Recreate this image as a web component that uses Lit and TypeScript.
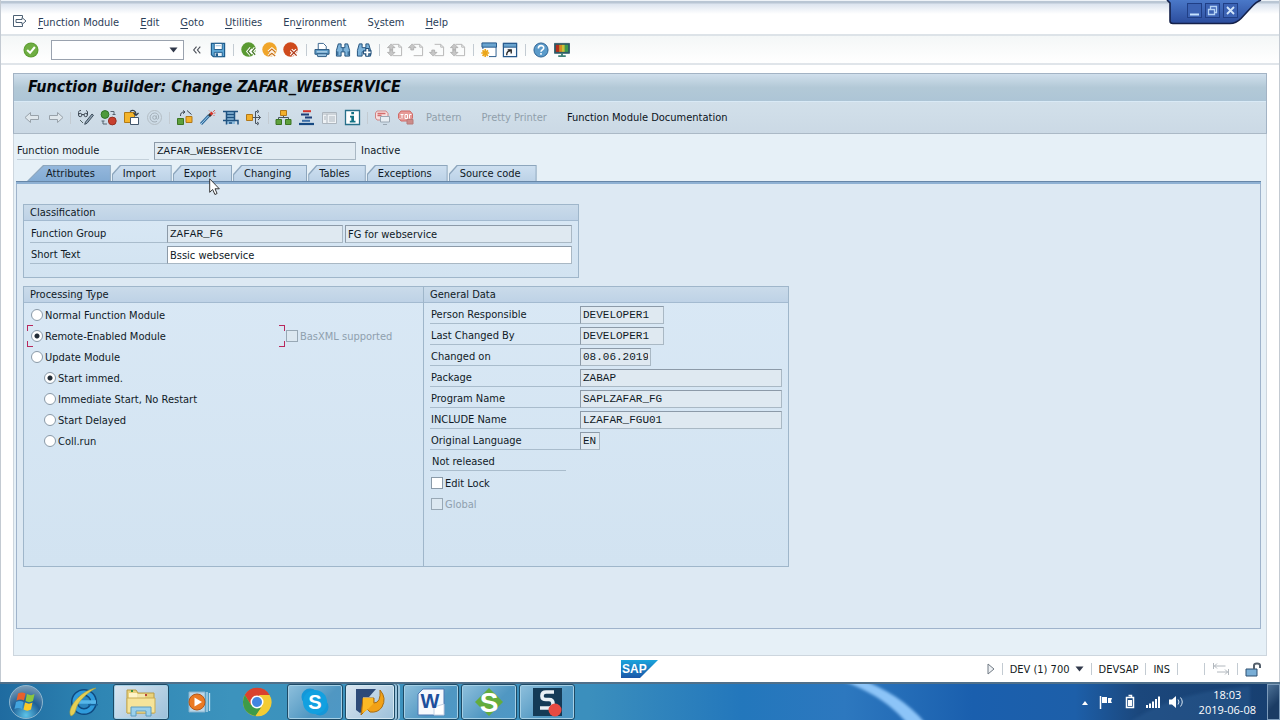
import { LitElement, html, svg, css, type TemplateResult, type SVGTemplateResult } from "lit";
import { customElement, property, state } from "lit/decorators.js";
import { classMap } from "lit/directives/class-map.js";

const icon = (body: SVGTemplateResult, size = 17, cls = "icon") =>
  html`<svg class=${cls} width=${size} height=${size} viewBox="0 0 17 17" aria-hidden="true">${body}</svg>`;

const page = svg`<path d="M6 2.500h6.500l3 3v9H6M12.500 2.500v3h3" fill="none" stroke="#b4b4b4"/>`;
const sheet = (arrows: SVGTemplateResult) => svg`${page}${arrows}`;
const upArrow = svg`<path d="M4.500 2 8.500 6H6v2.500H3V6H.500z" fill="#c6c6c6" stroke="#a8a8a8" stroke-width=".8"/>`;
const downArrow = svg`<path d="M4.500 15 8.500 11H6V8.500H3V11H.500z" fill="#c6c6c6" stroke="#a8a8a8" stroke-width=".8"/>`;

const glyphs: Record<string, SVGTemplateResult> = {
  enter: svg`<circle cx="8.500" cy="8.500" r="8" fill="#5f9f35"/><circle cx="8.500" cy="8.500" r="6.800" fill="#6fae43"/><path d="M4.400 8.600 7.500 11.500 12.600 5.300" fill="none" stroke="#fff" stroke-width="2.200"/>`,
  collapse: svg`<path d="M8 5 5 8.500 8 12M12 5 9 8.500 12 12" fill="none" stroke="#4b4f58" stroke-width="1.200"/>`,
  save: svg`<path d="M1.500 1.500h14v14h-12l-2-2z" fill="#5fa8d6" stroke="#1e5c8c" stroke-width="1.300"/><path d="M4.500 1.500h8.500v6.500h-8.500z" fill="#fff" stroke="#1e5c8c"/><path d="M4.500 15.500v-4.500h8.500v4.500z" fill="#e8f2fa" stroke="#1e5c8c"/><path d="M6 4h5.500" stroke="#8ebbdc"/><path d="M6 12h2.500v3H6z" fill="#1e5c8c"/>`,
  back: svg`<circle cx="8" cy="8" r="7.700" fill="#5a9a32"/><path d="M10.500 6.500 7.500 10l3 3.500M15 6.500 12 10l3 3.500" fill="none" stroke="#fff" stroke-width="3.400"/><path d="M10.500 6.500 7.500 10l3 3.500M15 6.500 12 10l3 3.500" fill="none" stroke="#4b7a2d" stroke-width="1.400"/>`,
  exit: svg`<circle cx="8" cy="8" r="7.700" fill="#f0a52a"/><path d="M7 10.500 10.500 7.500 14 10.500M7 15 10.500 12 14 15" fill="none" stroke="#fff" stroke-width="3.400"/><path d="M7 10.500 10.500 7.500 14 10.500M7 15 10.500 12 14 15" fill="none" stroke="#c9731c" stroke-width="1.400"/>`,
  cancel: svg`<circle cx="8" cy="8" r="7.700" fill="#cf4a1c"/><path d="m8.500 8.500 6 6m0-6-6 6" stroke="#fff" stroke-width="3.600"/><path d="m8.500 8.500 6 6m0-6-6 6" stroke="#b03a18" stroke-width="1.400"/>`,
  print: svg`<path d="M4.500 8V1.500h5.500l3 3V8" fill="#fff" stroke="#35628c"/><path d="M1 8h15v5H1z" fill="#5e9bc6" stroke="#28567f"/><path d="M3 12.500h11l-1 3H4z" fill="#9cc5e2" stroke="#28567f"/><path d="M3 10.500h11" stroke="#d8ebf7"/>`,
  find: svg`<path d="M3.500 2h3v4h4V2h3l2 7v6h-5v-4.500h-4V15h-5V9z" fill="#7db3da" stroke="#1f4f7a"/><path d="M8.500 6v4M3 10v4M14 10v4" stroke="#1f4f7a"/>`,
  findNext: svg`<path d="M3.500 2h3v4h4V2h3l2 7v6h-5v-4.500h-4V15h-5V9z" fill="#7db3da" stroke="#1f4f7a"/><path d="M12 6.500v9M7.500 11h9" stroke="#1f4f7a" stroke-width="4.400"/><path d="M12 7.500v7M8.500 11h7" stroke="#fff" stroke-width="2"/>`,
  firstPage: sheet(svg`${upArrow}${downArrow}`),
  prevPage: sheet(upArrow),
  nextPage: sheet(downArrow),
  lastPage: sheet(svg`${upArrow}${downArrow}`),
  newSession: svg`<path d="M2 1.500h14v14H2z" fill="#fff" stroke="#22568a"/><path d="M1 1h15.500v4.500H1z" fill="#6aa4cf" stroke="#22568a"/><path d="M0 7.500h8.500v9H0z" fill="#fff"/><path d="M4.500 7.500v8.500M.300 11.700h8.400M1.600 8.800l5.800 5.900M7.400 8.800l-5.800 5.900" stroke="#eba61a" stroke-width="1.800"/>`,
  shortcut: svg`<path d="M1.500 1.500h14v14h-14z" fill="#f7fafd" stroke="#22568a" stroke-width="1.300"/><path d="M1.500 1.500h14v4h-14z" fill="#6aa4cf" stroke="#22568a"/><path d="M5 14c0-3 1-4.500 4-4.500M6 8.300h3.800v3.800" fill="none" stroke="#222" stroke-width="1.400"/>`,
  help: svg`<circle cx="8.500" cy="8.500" r="7.500" fill="#5b9bca" stroke="#2a5f90"/><path d="M5.700 6.800c0-4 5.700-3.700 5.700-.5 0 2-2.900 2.200-2.900 4M8.500 11.600v2" fill="none" stroke="#fff" stroke-width="1.700"/>`,
  layout: svg`<path d="M.500 1.500h16v10.500H.500z" fill="#2c5a66" stroke="#3a6370"/><path d="M2 3h3.500v7.500H2z" fill="#b52f1c"/><path d="M5.500 3h3v7.500h-3z" fill="#d98b22"/><path d="M8.500 3h3v7.500h-3z" fill="#c8c23a"/><path d="M11.500 3H15v7.500h-3.500z" fill="#3f9c4b"/><path d="M8.500 12v2M4.500 15h8" stroke="#3e8277" stroke-width="2"/>`,
  left: svg`<path d="M1 8.500 6.500 3.500v3h8v4h-8v3z" fill="#dfe7ec" stroke="#98a2aa"/>`,
  right: svg`<path d="M16 8.500 10.500 3.500v3h-8v4h8v3z" fill="#dfe7ec" stroke="#98a2aa"/>`,
  display: svg`<path d="M1.500 6V3.500c0-1.500 1-2 2.500-2M1.500 6a1.700 1.700 0 1 0 3.400 0 1.700 1.700 0 1 0-3.400 0M7 6a1.700 1.700 0 1 0 3.400 0A1.700 1.700 0 1 0 7 6M10.500 6V2.500L9 1.500M5 5.500h2" fill="none" stroke="#3f4a55"/><path d="m8.500 13 6.500-8 1.500 1.300-6.500 8-2.300 1z" fill="#8fa3b3" stroke="#33424f" stroke-width=".9"/><path d="m3 11 3 3" stroke="#566"/>`,
  activeToggle: svg`<circle cx="5" cy="5.500" r="3.900" fill="#4e9a3b" stroke="#2f7426"/><circle cx="12.300" cy="12" r="3.900" fill="#c8402f" stroke="#963022"/><path d="M10.500 2.500h3.500v3M12.500 5.500h3M7 15H3v-3M4.500 12h-3" fill="none" stroke="#566571"/>`,
  otherObject: svg`<path d="M1.500 3.500h10v10h-10z" fill="#f4b52b" stroke="#b27a14"/><path d="M7.500 8.500h8v7h-8z" fill="#fff" stroke="#42566b"/><path d="M7 2.500c3-2 6-1 6 3M10.500 4l2.500 2.500L15.500 4" fill="none" stroke="#2f3c4a" stroke-width="1.200"/>`,
  spiral: svg`<circle cx="8.500" cy="8.500" r="7" fill="none" stroke="#b4bec5"/><circle cx="8.500" cy="8.500" r="1.800" fill="none" stroke="#a3afb8"/><path d="M10.300 6.500v3q1 1.500 2.200 0c.600-4-1.500-5.500-4-5.500a4.500 4.500 0 1 0 2.500 8.300" fill="none" stroke="#a3afb8"/>`,
  check: svg`<path d="M1.500 9.500h6v6h-6z" fill="#5ea03c" stroke="#3c7523"/><path d="M10 7.500h6v6h-6z" fill="#f3b02a" stroke="#b1781a"/><path d="M4.500 7c0-3 1-4 4-4M7 1.500 9 3 7 4.700M11 1.500l4.500 4" fill="none" stroke="#38434e"/>`,
  activate: svg`<path d="m2 15 8-8.500" stroke="#2d6a9c" stroke-width="3"/><path d="m2 15 8-8.500" stroke="#a9d2ee"/><path d="m10 7 2-2" stroke="#333" stroke-width="3"/><path d="m11.500 5.500 2-2" stroke="#d8392d" stroke-width="3"/><path d="M14 3l2-2M10 1.500l1 1M15.500 7l-1-1M16.500 4H15" stroke="#e0685c"/>`,
  test: svg`<path d="M4 2h9v13H4z" fill="#8dbbdc"/><path d="M1 2.500h15M1 11.500h15v4M4.500 2.500v13M12.500 2.500v9" fill="none" stroke="#1f5280" stroke-width="1.500"/><path d="M4.500 5.500h8M4.500 8.500h8M7 14h3" stroke="#1f5280" stroke-width="1.500"/>`,
  whereUsed: svg`<path d="M1.500 5.500h6v6h-6z" fill="#f3b02a" stroke="#b1781a"/><path d="M8 8.500h7.500M10.500 8.500v-6h2M10.500 8.500v6h2M13 6l2.500 2.500L13 11M12 1l2 1.500L12 4M12 13l2 1.500-2 1.500" fill="none" stroke="#4a5560"/>`,
  hierarchy: svg`<path d="M8.500 6v3M3.500 11V8.500h10V11" fill="none" stroke="#4a5560"/><path d="M5.500 1.500h6v5h-6z" fill="#f3b02a" stroke="#b1781a"/><path d="M1 10.500h5.500v5H1zM10.500 10.500H16v5h-5.500z" fill="#5ea03c" stroke="#3c7523"/>`,
  objectList: svg`<path d="M5 2.200h8" stroke="#d3362c" stroke-width="2"/><path d="M3 5.400h8M7 8.600h7" stroke="#1d3f78" stroke-width="2"/><path d="M4 11.800h8" stroke="#3b6fa8" stroke-width="2"/><path d="M1 15h15" stroke="#174a82" stroke-width="2.200"/>`,
  detail: svg`<path d="M1.500 3.500h14v11h-14z" fill="#eef2f5" stroke="#adb6be"/><path d="M1.500 5h14M6 5v9M8 8h6M8 10h6M8 12h6M3 8h2M3 10h2" stroke="#adb6be"/>`,
  info: svg`<path d="M1.500 1.500h14v14h-14z" fill="#fff" stroke="#27708a" stroke-width="1.300"/><path d="M7.300 3h2.700v2.300H7.300zM6 6.800h4v5h1.500v1.700H5.800v-1.700h1.500V8.500H6z" fill="#127384"/>`,
  breakpoint: svg`<path d="M3 2h9l2 2.500v4L12 11H3L1.500 9V4z" fill="#f6e0e0" stroke="#d08484"/><path d="M3.500 4.500h8M3.500 6.500h4" stroke="#d46c6c" stroke-width="1.300"/><path d="M6.500 7.500h9v5.500h-9zM9 15.500h4" fill="#e8eef3" stroke="#9aa7b3"/>`,
  stop: svg`<path d="M4 2h9l2.500 3v4L13 12H4L1.500 9V5z" fill="#e69a97" stroke="#d06b68"/><path d="M3.500 5.500h3M5 5.500v4M8 5.500h2.500v4H8zM12.500 9.500v-4h2M3.500 9.500h-1" fill="none" stroke="#fff"/><path d="M10 10.500h6v4.500h-6z" fill="#cc8c8a" stroke="#b77a78"/>`,
};

interface IconItem { id: string; label: string; off?: boolean }
const systemBar: (IconItem | null)[] = [
  { id: "collapse", label: "Collapse command field" },
  { id: "save", label: "Save" }, null,
  { id: "back", label: "Back" }, { id: "exit", label: "Exit" }, { id: "cancel", label: "Cancel" }, null,
  { id: "print", label: "Print" }, { id: "find", label: "Find" }, { id: "findNext", label: "Find next" }, null,
  { id: "firstPage", label: "First page", off: true }, { id: "prevPage", label: "Previous page", off: true },
  { id: "nextPage", label: "Next page", off: true }, { id: "lastPage", label: "Last page", off: true }, null,
  { id: "newSession", label: "New session" }, { id: "shortcut", label: "Create shortcut" }, null,
  { id: "help", label: "Help" }, { id: "layout", label: "Customize local layout" },
];
const appBar: (IconItem | null)[] = [
  { id: "left", label: "Previous object", off: true }, { id: "right", label: "Next object", off: true }, null,
  { id: "display", label: "Display or change" }, { id: "activeToggle", label: "Active or inactive" },
  { id: "otherObject", label: "Other object" }, { id: "spiral", label: "Enhance", off: true }, null,
  { id: "check", label: "Check" }, { id: "activate", label: "Activate" },
  { id: "test", label: "Test" }, { id: "whereUsed", label: "Where-used list" }, null,
  { id: "hierarchy", label: "Display object list" }, { id: "objectList", label: "Display navigation window" },
  { id: "detail", label: "Fullscreen", off: true }, { id: "info", label: "Information" }, null,
  { id: "breakpoint", label: "Set breakpoint", off: true }, { id: "stop", label: "Set external breakpoint", off: true },
];

const shared = css`
  :host { display: block; }
  * { box-sizing: border-box; }
  button, input {
    font: inherit; color: inherit; margin: 0; padding: 0; border: 0;
    background: none; border-radius: 0; outline: none;
  }
  svg { display: block; flex: none; }
`;

const bar = (items: (IconItem | null)[], size: number) => items.map((it) =>
  it === null
    ? html`<span class="sep"></span>`
    : html`<button class="ib" ?disabled=${!!it.off} aria-label=${it.label} title=${it.label}>${icon(glyphs[it.id], size)}</button>`);

@customElement("sap-attributes")
class SapAttributes extends LitElement {
  static styles = [shared, css`
    .groups { display: flex; flex-direction: column; gap: 8px; width: 766px; max-width: 100%; }
    .pair { display: grid; grid-template-columns: 401px 1fr; }
    .group { border: 1px solid #9fb6ca; background: linear-gradient(#d9e8f5, #d2e3f1); min-width: 0; }
    .classification { width: 556px; max-width: 100%; }
    .pair .group + .group { margin-left: -1px; }
    h2 {
      margin: 0; height: 16px; padding: 0 6px; font: inherit; line-height: 15px;
      background: linear-gradient(#cadbea, #bed2e6); border-bottom: 1px solid #a3bad0;
    }
    .rows { display: flex; flex-direction: column; gap: 3px; padding: 4px 6px 13px; }
    .pair .rows { padding: 3px 6px 53px; }
    .row { display: flex; height: 18px; }
    .caption { flex: none; line-height: 18px; padding-left: 1px; border-bottom: 1px solid #a9bccc; }
    .classification .caption { width: 137px; }
    .pair .caption { width: 150px; }
    .pair .caption.short { width: 136px; padding-left: 2px; }
    .field {
      height: 18px; padding: 0 2px; background: #dfe9f1; border: 1px solid #a9b8c4;
      border-top-color: #8c9aa8; border-left-color: #8c9aa8; min-width: 0;
    }
    .mono { font-family: "Liberation Mono", "Courier New", monospace; }
    .field.open { background: #fff; }
    .grow { flex: 1; }
    .w176 { width: 176px; } .w84 { width: 84px; } .w71 { width: 71px; }
    .w202 { width: 202px; } .w20 { width: 20px; }
    .second { margin-left: 2px; }
    .choice { display: flex; align-items: center; gap: 2px; padding-left: 1px; white-space: nowrap; }
    .choice.inner { padding-left: 14px; }
    .choice.off { color: #8fa0ae; }
    .framed { position: relative; width: 255px; flex: none; }
    .corner { position: absolute; width: 6px; height: 6px; border: 0 solid #b8285c; }
    .tl { left: -3px; top: -2px; border-width: 1px 0 0 1px; }
    .tr { right: 0; top: -2px; border-width: 1px 1px 0 0; }
    .bl { left: -3px; bottom: -2px; border-width: 0 0 1px 1px; }
    .br { right: 0; bottom: -2px; border-width: 0 1px 1px 0; }
    input[type="radio"], input[type="checkbox"] {
      appearance: none; width: 12px; height: 12px; flex: none; background: #fff; border: 1px solid #8a9aa8;
    }
    input[type="radio"] { border-radius: 50%; }
    input[type="radio"]:checked { background: radial-gradient(circle, #222c36 2px, #fff 3px); }
    input[type="checkbox"]:disabled { background: #dce8f1; border-color: #98a8b5; }
  `];

  private radio(name: string, text: string, on: boolean, cls = "") {
    return html`<label class="choice ${cls}"><input type="radio" name=${name} ?checked=${on} />${text}</label>`;
  }

  private data(id: string, text: string, value: string, width: string) {
    return html`<div class="row"><label class="caption" for=${id}>${text}</label><input id=${id} class="field mono ${width}" readonly .value=${value} /></div>`;
  }

  render() {
    return html`
      <div class="groups">
        <section class="group classification">
          <h2>Classification</h2>
          <div class="rows">
            <div class="row">
              <label class="caption" for="group">Function Group</label>
              <input id="group" class="field mono w176" readonly .value=${"ZAFAR_FG"} />
              <input class="field grow second" aria-label="Function group text" readonly .value=${"FG for webservice"} />
            </div>
            <div class="row">
              <label class="caption" for="short">Short Text</label>
              <input id="short" class="field open grow" .value=${"Bssic webservice"} />
            </div>
          </div>
        </section>
        <div class="pair">
          <section class="group">
            <h2>Processing Type</h2>
            <div class="rows">
              <div class="row">${this.radio("kind", "Normal Function Module", false)}</div>
              <div class="row">
                <div class="row framed">
                  ${this.radio("kind", "Remote-Enabled Module", true)}
                  <span class="corner tl"></span><span class="corner tr"></span>
                  <span class="corner bl"></span><span class="corner br"></span>
                </div>
                <label class="choice off"><input type="checkbox" disabled />BasXML supported</label>
              </div>
              <div class="row">${this.radio("kind", "Update Module", false)}</div>
              <div class="row">${this.radio("start", "Start immed.", true, "inner")}</div>
              <div class="row">${this.radio("start", "Immediate Start, No Restart", false, "inner")}</div>
              <div class="row">${this.radio("start", "Start Delayed", false, "inner")}</div>
              <div class="row">${this.radio("start", "Coll.run", false, "inner")}</div>
            </div>
          </section>
          <section class="group">
            <h2>General Data</h2>
            <div class="rows">
              ${this.data("person", "Person Responsible", "DEVELOPER1", "w84")}
              ${this.data("changer", "Last Changed By", "DEVELOPER1", "w84")}
              ${this.data("date", "Changed on", "08.06.2019", "w71")}
              ${this.data("package", "Package", "ZABAP", "w202")}
              ${this.data("program", "Program Name", "SAPLZAFAR_FG", "w202")}
              ${this.data("include", "INCLUDE Name", "LZAFAR_FGU01", "w202")}
              ${this.data("language", "Original Language", "EN", "w20")}
              <div class="row"><span class="caption short">Not released</span></div>
              <div class="row"><label class="choice"><input type="checkbox" />Edit Lock</label></div>
              <div class="row"><label class="choice off"><input type="checkbox" disabled />Global</label></div>
            </div>
          </section>
        </div>
      </div>`;
  }
}

@customElement("desk-taskbar")
class DeskTaskbar extends LitElement {
  static styles = [shared, css`
    .bar {
      position: relative; display: flex; align-items: stretch; height: 38px; overflow: hidden; color: #fff;
      border-top: 2px solid #50708a;
      background: linear-gradient(90deg, #1f6ba0 0, #2f86b4 8%, #3c93bd 18%, #3b8fbd 46%, #2377bc 58%, #2d78bf 66%, #1a5fae 76%, #1d5fa9 84%, #1b477c 89%, #173f70 100%);
    }
    .sweep { position: absolute; inset: 0; width: 100%; height: 100%; }
    .apps { position: relative; display: flex; gap: 2px; padding-left: 6px; }
    .app { width: 56px; display: flex; align-items: center; justify-content: center; border: 1px solid transparent; border-radius: 3px; }
    .app.start { width: 39px; margin-right: 8px; }
    .app.open { border-color: #1d4a66; box-shadow: inset 0 0 0 1px #a5d0e6; background: linear-gradient(135deg, #8fc0dc, #5097c2 60%, #4d98c6); }
    .app.bright { background: linear-gradient(135deg, #dbe6f0, #9cc0da); }
    .app.multi { width: 50px; margin-right: 6px; box-shadow: inset 0 0 0 1px #d5e8f3, 2px 0 0 #9cc4dd, 3px 0 0 #1d4a66, 5px 0 0 #9cc4dd; }
    .tray { position: relative; margin-left: auto; display: flex; align-items: center; gap: 9px; }
    .clock { font-family: "Open Sans", sans-serif; font-size: 11px; font-stretch: normal; line-height: 15px; text-align: center; margin: 0 2px 0 6px; }
    .peek { align-self: stretch; width: 13px; border: 1px solid #7d9cbb; background: linear-gradient(135deg, #4d7196, #1b3c64 60%); }
  `];

  private app(label: string, cls: string, w: number, h: number, body: SVGTemplateResult): TemplateResult {
    return html`<button class="app ${cls}" aria-label=${label}><svg width=${w} height=${h} viewBox="0 0 ${w} ${h}" aria-hidden="true">${body}</svg></button>`;
  }

  render() {
    return html`
      <nav class="bar" aria-label="Taskbar">
        <svg class="sweep" viewBox="0 0 1280 36" preserveAspectRatio="none" aria-hidden="true">
          <defs><filter id="soft" x="-20%" y="-50%" width="140%" height="200%"><feGaussianBlur stdDeviation="1.500" /></filter></defs>
          <path d="M840-4h22C884 4 908 18 926 40h-18C892 22 874 8 840-4z" fill="#8cc4f8" filter="url(#soft)" />
          <path d="M1130 38c30-20 60-30 120-36v36z" fill="#2d6096" opacity=".4" filter="url(#soft)" />
        </svg>
        <div class="apps">
          ${this.app("Start", "start", 36, 36, svg`
            <defs><radialGradient id="orb" cx=".5" cy=".9" r=".9"><stop offset="0" stop-color="#5cc3e8"/><stop offset=".5" stop-color="#1e5f96"/><stop offset="1" stop-color="#7f9fb8"/></radialGradient></defs>
            <circle cx="18" cy="18" r="16.500" fill="url(#orb)" stroke="#8db6cf"/>
            <path d="M10 9.500c3-1.500 5-1.500 7.500 0l-1.500 7c-2.500-1.500-5-1.500-7.500 0z" fill="#e8602c"/>
            <path d="M19 10c3 1.500 5 1.500 7.500 0l-1.500 7c-2.500 1.500-5 1.500-7.500 0z" fill="#8cc63e"/>
            <path d="M8 18c3-1.500 5-1.500 7.500 0l-1.500 7c-2.500-1.500-5-1.500-7.500 0z" fill="#43a4de"/>
            <path d="M17 18.500c3 1.500 5 1.500 7.500 0l-1.500 7c-2.500 1.500-5 1.500-7.500 0z" fill="#fbc926"/>`)}
          ${this.app("Internet Explorer", "", 32, 32, svg`
            <circle cx="17" cy="16" r="9.500" fill="#2b86c0" stroke="#0f4a80" stroke-width="7"/>
            <circle cx="17" cy="16" r="9.500" fill="none" stroke="#2f9bdc" stroke-width="4"/>
            <path d="M9 16h20" stroke="#56b6ea" stroke-width="3.500"/><path d="M21 19.500h10v-1.500h-10z" fill="#17639c"/>
            <path d="M4 30C-1 24 12 5 29 2c-9 5-18 13-20 21-.5 3-2 6-5 7z" fill="#e5cf55" stroke="#a8a040" stroke-width=".6"/>`)}
          ${this.app("Windows Explorer", "open bright", 32, 30, svg`
            <path d="M2 3h9l2 3h16v20H2z" fill="#e9d27c" stroke="#b99b45"/><path d="M4 6h8v6H4z" fill="#fff4c8"/><path d="M12 7h8v4h-8z" fill="#f4e8b0"/>
            <path d="M2 11h28v15H2z" fill="#f6e49a" stroke="#c9ac54"/><path d="M6 3h2v2H6z" fill="#3b8e3e"/><path d="M20 7h2v2h-2z" fill="#b8433b"/>
            <path d="M6 29v-9h20v9h-5v-5H11v5z" fill="#9bd1ec" stroke="#5d9cc0"/>`)}
          ${this.app("Media Player", "", 26, 24, svg`
            <path d="M3 2h16v20H3z" fill="#b8d7ea" stroke="#86b2cd"/><path d="M21 2v20M23.500 3v18" stroke="#bfe0f2" stroke-width="1.300"/>
            <circle cx="11" cy="12" r="8" fill="#ea7a24" stroke="#b5581a"/><path d="M8.500 7.500 16 12l-7.500 4.500z" fill="#fff"/>`)}
          ${this.app("Chrome", "", 30, 30, svg`
            <circle cx="15" cy="15" r="14" fill="#e0bb2b"/><path d="M15 15 2.900 8A14 14 0 0 1 27.100 8z" fill="#d9412f"/>
            <path d="M15 8h12.500A14 14 0 0 0 2.900 8L9 18z" fill="#d9412f"/><path d="M2.900 8A14 14 0 0 0 13.500 29L19 21 9 18z" fill="#3d9b48"/>
            <path d="M27.500 8H17l4 10-7.500 11A14 14 0 0 0 27.500 8z" fill="#f3cc34"/><circle cx="15" cy="15" r="6.500" fill="#fff"/><circle cx="15" cy="15" r="5" fill="#4285e0"/>`)}
          ${this.app("Skype", "open", 30, 30, svg`
            <circle cx="10" cy="10" r="8.500" fill="#1497d8"/><circle cx="20" cy="20" r="8.500" fill="#1497d8"/><circle cx="15" cy="15" r="12" fill="#12a0e0"/>
            <text x="15" y="22" text-anchor="middle" font-family="Liberation Sans, sans-serif" font-weight="700" font-size="20" fill="#fff">S</text>`)}
          ${this.app("SAP Logon", "open bright multi", 32, 30, svg`
            <path d="M2 2h20l-7 8H9v14l-3 2-4-3z" fill="#2d4a78"/>
            <path d="M9 11h11v5q7 0 6-13 7 8 2 17-4 6-12 5l-3-3-6 6z" fill="#f2a116" stroke="#a96d12"/><path d="M9 11h10v6l-6 6-4 3z" fill="#fbb924"/>`)}
          ${this.app("Word", "open", 30, 30, svg`
            <path d="M7 2h21v26H2V7z" fill="#f6f9fd" stroke="#4f79b3"/><path d="m18 20 10-3v11H18z" fill="#fff" stroke="#c2d0e2"/>
            <text x="14" y="21" text-anchor="middle" font-family="Liberation Sans, sans-serif" font-weight="700" font-size="20" fill="#1c4f9c">W</text>`)}
          ${this.app("Camtasia", "open", 30, 30, svg`
            <path d="M15 1 29 15 15 29 1 15z" fill="#63ac3d"/>
            <text x="15" y="25" text-anchor="middle" font-family="Liberation Sans, sans-serif" font-weight="700" font-size="28" fill="#fff">S</text>`)}
          ${this.app("Recorder", "open", 32, 32, svg`
            <path d="M2 2h29v28H2z" fill="#143b57"/>
            <path d="M23 6H15q-4 0-4 3.500v1q0 3 4 3h3q4 0 4 4v1q0 3.500-4 3.500H9" fill="none" stroke="#e8f0f5" stroke-width="3.600"/>
            <circle cx="24" cy="24" r="6.500" fill="#e84a42"/>`)}
        </div>
        <div class="tray">
          <svg width="8" height="5" viewBox="0 0 8 5" aria-hidden="true"><path d="M1 5 4 1l3 4z" fill="#fff"/></svg>
          <svg width="16" height="16" viewBox="0 0 16 16" aria-hidden="true"><path d="M2.500 2v13" stroke="#fff" stroke-width="1.500"/><path d="M4 3h5v6H4zM10 4h4l-1 3 1 2h-4z" fill="#fff"/></svg>
          <svg width="14" height="16" viewBox="0 0 14 16" aria-hidden="true"><path d="M3.500 3.500h7v10h-7zM5.500 1.500h3v2" fill="none" stroke="#fff" stroke-width="1.500"/><path d="M5 6h4v6H5z" fill="#fff"/></svg>
          <svg width="14" height="14" viewBox="0 0 14 14" aria-hidden="true"><path d="M0 10h2v3H0zM3 8.500h2V13H3zM6 6.500h2V13H6zM9 4h2v9H9zM12 1.500h2V13h-2z" fill="#fff"/></svg>
          <svg width="15" height="14" viewBox="0 0 15 14" aria-hidden="true"><path d="M0 4.500h3L7 1v12L3 9.500H0z" fill="#fff"/><path d="M9 4.500q2 2.500 0 5M11.500 2.500q3.500 4.500 0 9" fill="none" stroke="#dce9f5"/></svg>
          <div class="clock">18:03<br />2019-06-08</div>
          <button class="peek" aria-label="Show desktop"></button>
        </div>
      </nav>`;
  }
}

@customElement("app-root")
class AppRoot extends LitElement {
  @property() heading = "Function Builder: Change ZAFAR_WEBSERVICE";
  @state() private tab = "Attributes";

  static styles = [shared, css`
    :host { font-family: "DejaVu Sans Condensed", "DejaVu Sans", sans-serif; font-size: 11px; font-stretch: condensed; color: #101a26; }
    .screen { position: relative; min-height: 100vh; display: flex; flex-direction: column; background: #fff; }
    .client { flex: 1; display: flex; flex-direction: column; border: solid #c3cad2; border-width: 0 1px; }
    .menu {
      display: flex; align-items: center; gap: 21px; height: 36px; padding: 10px 12px 0; color: #2c4058;
      border-bottom: 2px solid #dde3e8;
      background: linear-gradient(#eef3f8 0, #eef3f8 1px, #b9c6d4 1px, #b9c6d4 3px, #dce4ef 4px, #fff 14px);
    }
    .menu svg { margin-right: -10px; }
    u { text-underline-offset: 2px; }
    .system { display: flex; align-items: center; gap: 5px; height: 29px; padding: 0 22px; border-bottom: 2px solid #e0e5ea; background: linear-gradient(#f4f7f7, #fff); }
    .ib { display: flex; }
    .sep { width: 5px; height: 12px; background: linear-gradient(#c3cbd2, #c3cbd2) center / 1px 100% no-repeat; }
    .combo { display: flex; align-items: center; width: 133px; height: 20px; margin-left: 7px; padding-right: 5px; border: 1px solid #9aa2ae; background: #fff; }
    .combo input { flex: 1; min-width: 0; height: 100%; padding: 0 3px; }
    .work { flex: 1; display: flex; flex-direction: column; margin: 8px 12px 0; }
    .head { border: 1px solid #a3b3c4; border-bottom-color: #abb9c6; }
    h1 {
      margin: 0; height: 28px; padding-left: 14px; line-height: 25px; font-size: 16px; font-weight: 700; font-style: italic; color: #05080c;
      background: linear-gradient(#d0dfec, #b3c9d7 50%, #adc5d6); border-bottom: 1px solid #d9eaf6;
    }
    .tools { display: flex; align-items: center; gap: 6px; height: 31px; padding-left: 10px; background: linear-gradient(#d2e0ea, #cbd9e5); color: #0c141c; }
    .tools .sep { width: 1px; }
    .texts { display: flex; gap: 20px; margin-left: 6px; white-space: nowrap; }
    .texts button:disabled { color: #909fab; }
    .body { flex: 1; display: flex; flex-direction: column; padding: 8px 5px 26px 2px; border: solid #cdd6de; border-width: 0 1px 1px; background: #e6f0f7; }
    .name { display: flex; gap: 5px; height: 18px; line-height: 18px; padding-left: 1px; }
    .name label { width: 132px; border-bottom: 1px solid #c3d0da; }
    .name input { width: 202px; height: 18px; padding: 0 2px; border: 1px solid #a9b8c4; border-top-color: #8c9aa8; border-left-color: #8c9aa8; background: #e1ebf2; font-family: "Liberation Mono", monospace; }
    .tabs { display: flex; gap: 1px; margin-top: 5px; padding-left: 11px; height: 16px; }
    .tab { padding: 0 16px 0 11px; background: #8da6bd; clip-path: polygon(0 100%, 0 9px, 8px 0, 100% 0, 100% 100%); position: relative; z-index: 0; line-height: 18px; }
    .tab::before { content: ""; position: absolute; inset: 1px 1px 0; z-index: -1; background: linear-gradient(#cddff0, #bcd2e7); clip-path: polygon(0 100%, 0 9px, 8px 0, 100% 0, 100% 100%); }
    .tab.on { padding-left: 19px; clip-path: polygon(0 100%, 16px 0, 100% 0, 100% 100%); }
    .tab.on::before { background: linear-gradient(#94b7dc, #83abd3); clip-path: polygon(0 100%, 16px 0, 100% 0, 100% 100%); }
    .panel { flex: 1; padding: 20px 6px; border: 1px solid #9fb3cb; border-top: 0; background: #dde9f3; }
    .rule { height: 3px; background: linear-gradient(#6787a8 0, #6787a8 1px, #8fb1d3 1px); }
    .status { display: grid; grid-template-columns: 1fr auto 1fr; align-items: center; height: 26px; padding: 0 18px 0 17px; color: #141b22; }
    .fields { display: flex; justify-content: flex-end; align-items: center; gap: 5px; }
    .logo { grid-column: 2; }
    .blank { width: 12px; }
    .window { position: absolute; top: 0; right: 18px; width: 96px; height: 26px; }
    .window > svg { position: absolute; inset: 0; }
    .buttons { position: relative; display: flex; gap: 3px; padding: 3px 0 0 21px; }
    .wb { width: 15px; height: 15px; border: 1px solid #203f86; background: #3c63b4; }
    .pointer { position: absolute; left: 209px; top: 178px; }
  `];

  render() {
    const menus: [string, string, string][] = [
      ["", "F", "unction Module"], ["", "E", "dit"], ["", "G", "oto"], ["", "U", "tilities"],
      ["En", "v", "ironment"], ["S", "y", "stem"], ["", "H", "elp"],
    ];
    const tabs = ["Attributes", "Import", "Export", "Changing", "Tables", "Exceptions", "Source code"];
    return html`
      <div class="screen">
        <div class="client">
          <nav class="menu" aria-label="Menu">
            <svg width="14" height="14" viewBox="0 0 14 14" aria-hidden="true"><path d="M9.500 3V.500h-9v11h9V9" fill="none" stroke="#4c6074"/><path d="M3 4.500h6V2.500l4 3.500-4 3.500V7.500H3z" fill="#fff" stroke="#4c6074"/></svg>
            ${menus.map(([a, k, b]) => html`<button>${a}<u>${k}</u>${b}</button>`)}
          </nav>
          <div class="system">
            <button class="ib" aria-label="Enter">${icon(glyphs.enter, 16)}</button>
            <div class="combo">
              <input aria-label="Command" />
              <button aria-label="Command history"><svg width="9" height="6" viewBox="0 0 9 6"><path d="M.500.500h8L4.500 5.500z" fill="#30384a"/></svg></button>
            </div>
            ${bar(systemBar, 16)}
          </div>
          <main class="work">
            <header class="head">
              <h1>${this.heading}</h1>
              <div class="tools">
                ${bar(appBar, 17)}
                <div class="texts">
                  <button disabled>Pattern</button>
                  <button disabled>Pretty Printer</button>
                  <button>Function Module Documentation</button>
                </div>
              </div>
            </header>
            <div class="body">
              <div class="name">
                <label for="module">Function module</label>
                <input id="module" readonly .value=${"ZAFAR_WEBSERVICE"} />
                <span>Inactive</span>
              </div>
              <div class="tabs" role="tablist">
                ${tabs.map((t) => html`<button role="tab" aria-selected=${t === this.tab ? "true" : "false"}
                  class=${classMap({ tab: true, on: t === this.tab })} @click=${() => { this.tab = t; }}>${t}</button>`)}
              </div>
              <div class="rule"></div>
              <div class="panel" role="tabpanel"><sap-attributes></sap-attributes></div>
            </div>
          </main>
          <footer class="status">
            <svg class="logo" width="37" height="18" viewBox="0 0 37 18" role="img" aria-label="SAP">
              <defs><linearGradient id="sap" x2="0" y2="1"><stop stop-color="#1ba4dc"/><stop offset="1" stop-color="#1a56a8"/></linearGradient></defs>
              <path d="M0 0h37L19 18H0z" fill="url(#sap)"/>
              <text x="1" y="13" font-family="Liberation Sans, sans-serif" font-weight="700" font-size="12" fill="#fff">SAP</text>
            </svg>
            <div class="fields">
              <svg width="8" height="12" viewBox="0 0 8 12" aria-hidden="true"><path d="M1 1v10l6-5z" fill="#eef1f4" stroke="#717a84"/></svg>
              <span class="sep"></span><span>DEV (1) 700</span>
              <svg width="9" height="6" viewBox="0 0 9 6" aria-hidden="true"><path d="M.500.500h8L4.500 5.500z" fill="#30384a"/></svg>
              <span class="sep"></span><span>DEVSAP</span>
              <span class="sep"></span><span>INS</span>
              <span class="sep"></span><span class="blank"></span><span class="sep"></span>
              <svg width="18" height="14" viewBox="0 0 18 14" aria-hidden="true"><path d="M1.500 1v6M1.500 4h12M5 1.500 2.500 4 5 6.500M16.500 7v6M16 10H5M13 7.500l2.500 2.500L13 12.500" fill="none" stroke="#b2b8be"/></svg>
              <span class="sep"></span>
              <svg width="16" height="15" viewBox="0 0 16 15" aria-hidden="true"><path d="M1 7h11v7H1z" fill="#79aed6" stroke="#2d4f70"/><path d="M9 7V3.500q0-2 3-2t3 2V6" fill="none" stroke="#54606c" stroke-width="2"/></svg>
            </div>
          </footer>
        </div>
        <desk-taskbar></desk-taskbar>
        <div class="window">
          <svg width="96" height="26" viewBox="0 0 96 26" aria-hidden="true">
            <defs><linearGradient id="tab" x2="0" y2="1"><stop stop-color="#4a78c8"/><stop offset="1" stop-color="#2b4c9c"/></linearGradient></defs>
            <path d="M1 0 4 3V21q0 2.500 3 2.500h57q6 0 11-5l12-13Q90 2 95 0z" fill="url(#tab)"/>
            <path d="M1 0 4 3V21q0 2.500 3 2.500h57q6 0 11-5l12-13Q90 2 95 0" fill="none" stroke="#14214a" stroke-width="1.600"/>
          </svg>
          <div class="buttons">
            <button class="wb" aria-label="Minimize"><svg width="13" height="13"><path d="M2 10.500h9" stroke="#c5e2ff" stroke-width="2"/></svg></button>
            <button class="wb" aria-label="Restore"><svg width="13" height="13"><path d="M4.500 5V2.500h6v6H9M2.500 5.500h6v5h-6z" fill="none" stroke="#b5d3f5" stroke-width="1.300"/></svg></button>
            <button class="wb" aria-label="Close"><svg width="13" height="13"><path d="m3 3 7 7m0-7-7 7" stroke="#d3e6fb" stroke-width="1.800"/></svg></button>
          </div>
        </div>
        <svg class="pointer" width="12" height="18" viewBox="0 0 12 18" aria-hidden="true"><path d="M.700.800v13.500l3-2.800 2.200 5 2.200-1-2.100-4.700h4.300z" fill="#fff" stroke="#222" stroke-width=".9"/></svg>
      </div>`;
  }
}
